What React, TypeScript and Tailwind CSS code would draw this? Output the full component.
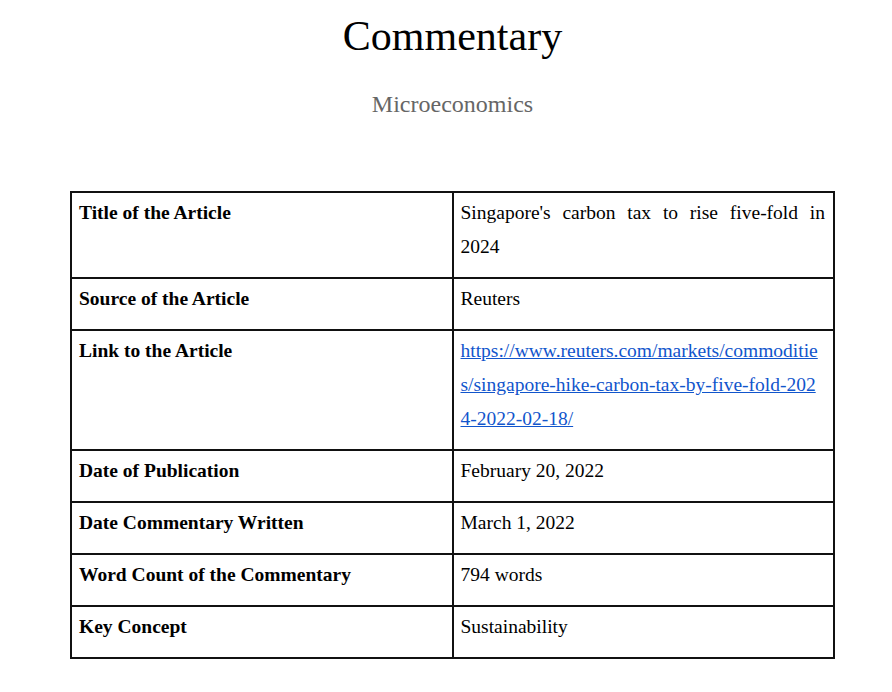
const rows: { label: string; value: React.ReactNode }[] = [
  {
    label: 'Title of the Article',
    value: <span className="block text-justify">Singapore's carbon tax to rise five-fold in 2024</span>,
  },
  { label: 'Source of the Article', value: 'Reuters' },
  {
    label: 'Link to the Article',
    value: (
      <a href="#" className="text-[#1155cc] underline">
        <span className="block">https://www.reuters.com/markets/commoditie</span>
        <span className="block">s/singapore-hike-carbon-tax-by-five-fold-202</span>
        <span className="block">4-2022-02-18/</span>
      </a>
    ),
  },
  { label: 'Date of Publication', value: 'February 20, 2022' },
  { label: 'Date Commentary Written', value: 'March 1, 2022' },
  { label: 'Word Count of the Commentary', value: '794 words' },
  { label: 'Key Concept', value: 'Sustainability' },
];

export default function App() {
  return (
    <div className="min-h-[692px] w-[892px] bg-white text-black font-['Liberation_Serif',serif]">
      <div className="ml-[70px] w-[765px] pt-[10px]">
        <h1 className="text-center text-[42px] leading-[52px]">Commentary</h1>
        <p className="mt-[27px] text-center text-[24px] leading-[30px] text-[#666666]">Microeconomics</p>
        <table className="mt-[72px] w-[765px] table-fixed border-collapse text-[19.5px] leading-[34px]">
          <tbody>
            {rows.map((r) => (
              <tr key={r.label}>
                <td className="w-1/2 border-2 border-[#111] pl-[7px] pr-[8px] pt-[3px] pb-[13px] align-top font-bold">
                  {r.label}
                </td>
                <td className="w-1/2 border-2 border-[#111] pl-[7px] pr-[8px] pt-[3px] pb-[13px] align-top">{r.value}</td>
              </tr>
            ))}
          </tbody>
        </table>
      </div>
    </div>
  );
}
